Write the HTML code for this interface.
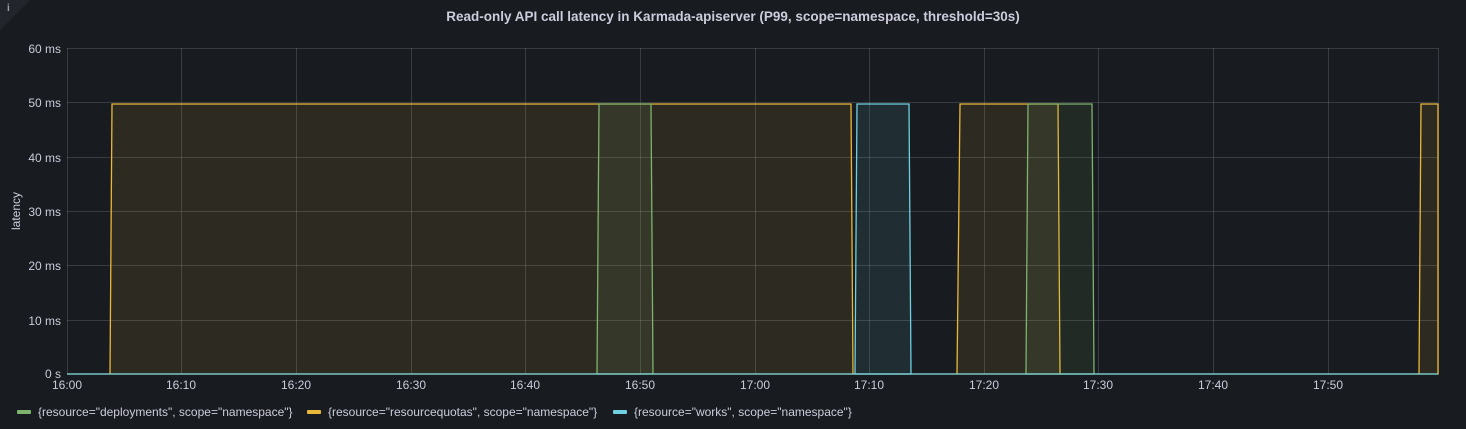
<!DOCTYPE html>
<html><head><style>
html,body{margin:0;padding:0;background:#181b1f;width:1466px;height:429px;overflow:hidden}
svg{display:block;font-family:"Liberation Sans",sans-serif}
</style></head><body>
<svg width="1466" height="429" xmlns="http://www.w3.org/2000/svg">
<rect width="1466" height="429" fill="#181b1f"/>
<path d="M0 0H30L0 30Z" fill="#22252b"/>
<text x="7" y="11" font-size="10" fill="#9fa1a6" font-weight="bold">i</text>
<text x="733" y="21" font-size="13.5" fill="#ccccdc" text-anchor="middle" font-weight="bold">Read-only API call latency in Karmada-apiserver (P99, scope=namespace, threshold=30s)</text>
<g stroke="#ccccdc" stroke-opacity="0.18" stroke-width="1">
<line x1="67" y1="48.5" x2="1438" y2="48.5"/>
<line x1="67" y1="102.5" x2="1438" y2="102.5"/>
<line x1="67" y1="157.5" x2="1438" y2="157.5"/>
<line x1="67" y1="211.5" x2="1438" y2="211.5"/>
<line x1="67" y1="265.5" x2="1438" y2="265.5"/>
<line x1="67" y1="320.5" x2="1438" y2="320.5"/>
<line x1="67.5" y1="48" x2="67.5" y2="374"/>
<line x1="181.5" y1="48" x2="181.5" y2="374"/>
<line x1="296.5" y1="48" x2="296.5" y2="374"/>
<line x1="411.5" y1="48" x2="411.5" y2="374"/>
<line x1="525.5" y1="48" x2="525.5" y2="374"/>
<line x1="640.5" y1="48" x2="640.5" y2="374"/>
<line x1="755.5" y1="48" x2="755.5" y2="374"/>
<line x1="869.5" y1="48" x2="869.5" y2="374"/>
<line x1="984.5" y1="48" x2="984.5" y2="374"/>
<line x1="1098.5" y1="48" x2="1098.5" y2="374"/>
<line x1="1213.5" y1="48" x2="1213.5" y2="374"/>
<line x1="1328.5" y1="48" x2="1328.5" y2="374"/>
<line x1="1438.5" y1="48" x2="1438.5" y2="374"/>
</g>
<g font-size="12" fill="#ccccdc" text-anchor="end">
<text x="61" y="53">60 ms</text><text x="61" y="107">50 ms</text><text x="61" y="162">40 ms</text>
<text x="61" y="216">30 ms</text><text x="61" y="270">20 ms</text><text x="61" y="325">10 ms</text><text x="61" y="378">0 s</text>
</g>
<g font-size="12" fill="#ccccdc" text-anchor="middle">
<text x="67" y="389">16:00</text><text x="181" y="389">16:10</text><text x="296" y="389">16:20</text><text x="411" y="389">16:30</text>
<text x="525" y="389">16:40</text><text x="640" y="389">16:50</text><text x="755" y="389">17:00</text><text x="869" y="389">17:10</text>
<text x="984" y="389">17:20</text><text x="1098" y="389">17:30</text><text x="1213" y="389">17:40</text><text x="1328" y="389">17:50</text>
</g>
<text transform="translate(20,211) rotate(-90)" font-size="12" fill="#ccccdc" text-anchor="middle">latency</text>
<!-- orange -->
<g fill="#EAB839" fill-opacity="0.1" stroke="#EAB839" stroke-width="1.3">
<path d="M67 374H110L112 104H851L853 374Z"/>
<path d="M957 374L960 104H1058L1060 374Z"/>
<path d="M1419 374L1421 104H1438V374Z"/>
<path d="M1060 374H1419" fill="none"/>
<path d="M853 374H957" fill="none"/>
</g>
<!-- green -->
<g fill="#7EB26D" fill-opacity="0.1" stroke="#7EB26D" stroke-width="1.3">
<path d="M597 374L599 104H651L653 374Z"/>
<path d="M1026 374L1028 104H1092L1094 374Z"/>
</g>
<!-- blue -->
<g fill="#6ED0E0" fill-opacity="0.1" stroke="#6ED0E0" stroke-width="1.3">
<path d="M855 374L857 104H909L911 374Z"/>
</g>
<line x1="67" y1="374" x2="1438" y2="374" stroke="#6ED0E0" stroke-width="1.3"/>
<g font-size="12" fill="#ccccdc">
<rect x="17" y="410" width="14" height="4" rx="1" fill="#7EB26D"/>
<text x="38" y="416">{resource="deployments", scope="namespace"}</text>
<rect x="307" y="410" width="14" height="4" rx="1" fill="#EAB839"/>
<text x="328" y="416">{resource="resourcequotas", scope="namespace"}</text>
<rect x="613" y="410" width="14" height="4" rx="1" fill="#6ED0E0"/>
<text x="634" y="416">{resource="works", scope="namespace"}</text>
</g>
</svg>
</body></html>
